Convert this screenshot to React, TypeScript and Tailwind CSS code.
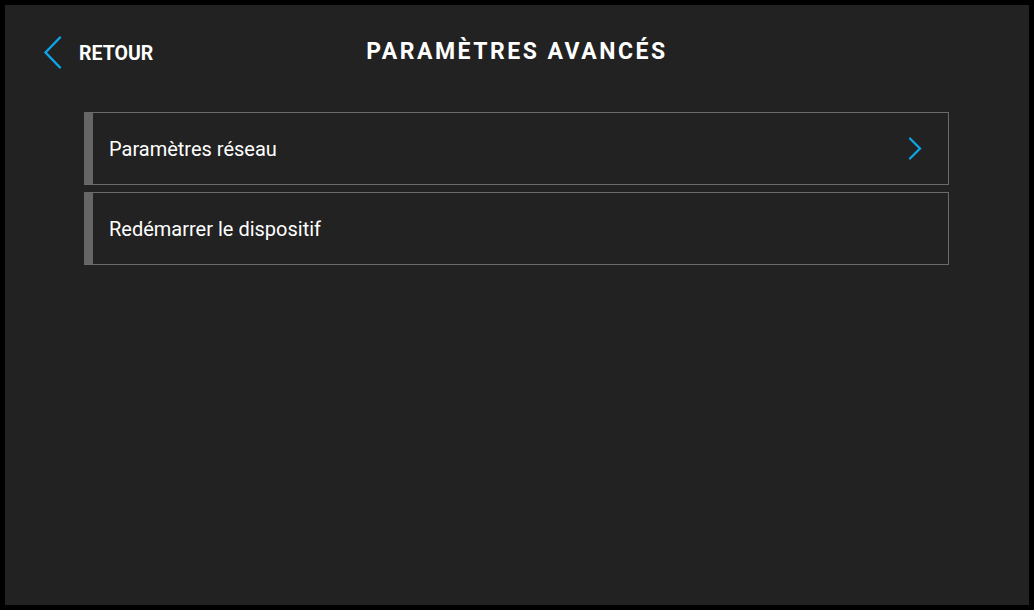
import React from "react";

function ChevronLeft() {
  return (
    <svg width="19" height="33" viewBox="0 0 19 33" fill="none">
      <path d="M17 1.5 L2.5 16.5 L17 31.5" stroke="#0ea5e9" strokeWidth="2.4" strokeLinecap="round" strokeLinejoin="miter" />
    </svg>
  );
}

function ChevronRight() {
  return (
    <svg width="14" height="23" viewBox="0 0 14 23" fill="none">
      <path d="M2 1.5 L12 11.5 L2 21.5" stroke="#0ea5e9" strokeWidth="2.2" strokeLinecap="round" />
    </svg>
  );
}

function Row({ label, arrow }: { label: string; arrow?: boolean }) {
  return (
    <div className="flex h-[73px] border border-[#6a6a6a] border-l-0">
      <div className="w-[9px] bg-[#666666] shrink-0" />
      <div className="flex flex-1 items-center justify-between pl-[16px] pr-[26px]">
        <span className="text-[20px] text-white">{label}</span>
        {arrow && <ChevronRight />}
      </div>
    </div>
  );
}

export default function App() {
  return (
    <div className="w-[1034px] h-[610px] bg-black p-[5px]" style={{ fontFamily: "Roboto, 'Noto Sans', sans-serif" }}>
      <div className="w-full h-full bg-[#222222] flex flex-col">
        <div className="relative h-[92px] flex items-center">
          <div className="flex items-center pl-[38px] pt-[2px]">
            <ChevronLeft />
            <span className="ml-[17px] pt-[3px] text-white font-bold text-[19.5px]">RETOUR</span>
          </div>
          <div className="absolute left-0 right-0 top-0 h-[92px] flex items-center justify-center pointer-events-none">
            <span className="text-white font-bold text-[23px] tracking-[2.5px] pt-[2px]">PARAMÈTRES AVANCÉS</span>
          </div>
        </div>
        <div className="ml-[79px] w-[865px] mt-[15px] flex flex-col gap-[7px]">
          <Row label="Paramètres réseau" arrow />
          <Row label="Redémarrer le dispositif" />
        </div>
      </div>
    </div>
  );
}
